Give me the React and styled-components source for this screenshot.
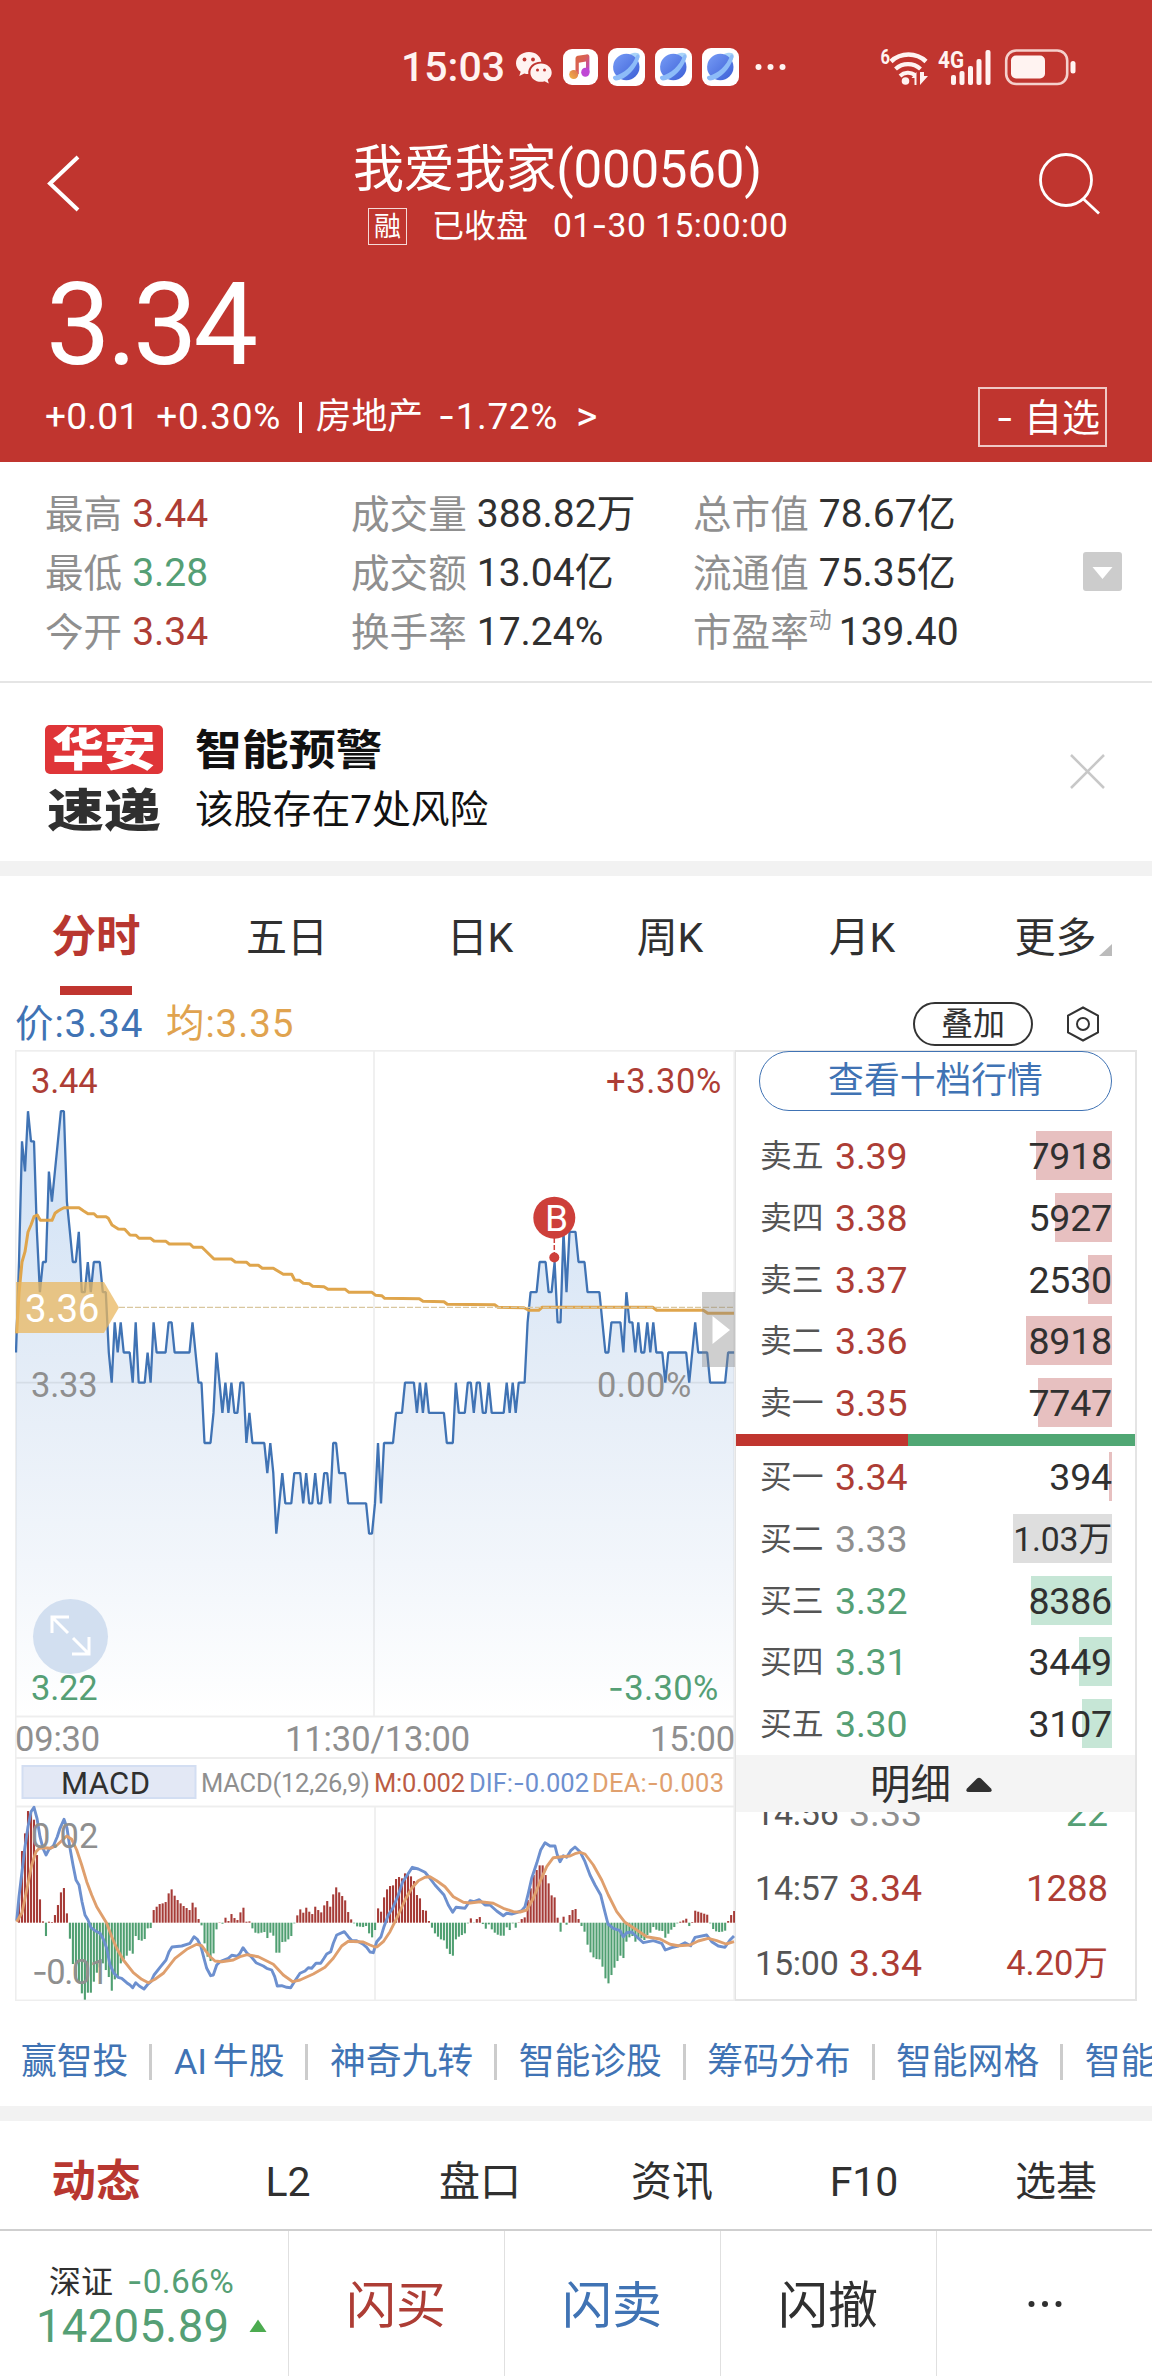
import React from 'react';
import styled, { createGlobalStyle } from 'styled-components';

const RED = '#c0352f';
const UP = '#ad3d35';
const DOWN = '#559f75';
const BLUE = '#4073b4';
const INK = '#303030';
const GREY = '#8f8f8f';
const FONT = "Roboto, 'Noto Sans CJK SC', sans-serif";

const Global = createGlobalStyle`
  * { box-sizing: border-box; }
  body { margin: 0; background: #fff; }
`;

const Page = styled.main`
  width: 1152px;
  height: 2376px;
  overflow: hidden;
  display: flex;
  flex-direction: column;
  background: #fff;
  color: ${INK};
  font-family: ${FONT};
  line-height: 1;
  white-space: nowrap;
`;

const Label = styled.span`
  font-size: ${(p) => p.$size}px;
  letter-spacing: ${(p) => p.$ls || 0}px;
  font-weight: ${(p) => p.$weight || 400};
  color: ${(p) => p.$color || 'inherit'};
  line-height: 1.2;
  margin-left: ${(p) => p.$ml || 0}px;
`;

// A wider hyphen for signed figures and dates.
const Hyphen = styled.span`
  font-family: Inter, sans-serif;
  line-height: 1;
`;

/* ---------- header ---------- */
const Header = styled.header`
  height: 462px;
  flex: none;
  background: ${RED};
  color: #fff;
  display: flex;
  flex-direction: column;
`;

const StatusBar = styled.div`
  height: 134px;
  display: flex;
  align-items: center;
  padding: 0 72px 0 401px;
`;

const Clock = styled.span`
  width: 114px;
  font-size: 41px;
  font-weight: 500;
  color: #fff3f1;
`;

const NotificationIcons = styled.div`
  display: flex;
  align-items: center;
  gap: 10px;
  flex: 1;
`;

const SystemIcons = styled.div`
  display: flex;
  align-items: center;
`;

const TitleRow = styled.div`
  height: 120px;
  display: grid;
  grid-template-columns: 180px 1fr 180px;
`;

const BackButton = styled.button`
  border: 0;
  padding: 20px 0 0 45px;
  background: none;
  display: flex;
`;

const SearchButton = styled.button`
  border: 0;
  padding: 17px 0 0 66px;
  background: none;
  display: flex;
`;

const TitleBlock = styled.div`
  display: flex;
  flex-direction: column;
  align-items: flex-start;
`;

const Title = styled.h1`
  margin: 4px 0 0 173px;
  font-weight: 400;
  font-size: 51px;
  line-height: 64px;
  letter-spacing: -0.2px;
`;

const SubRow = styled.div`
  display: flex;
  align-items: center;
  margin: 6px 0 0 188px;
  height: 37px;
`;

const MarginTag = styled.span`
  width: 39px;
  height: 37px;
  border: 1.5px solid #f5dad8;
  font-size: 27px;
  line-height: 36px;
  text-align: center;
  margin-right: 25px;
`;

const Price = styled.div`
  height: 128px;
  padding: 7px 0 0 46px;
  font-size: 115px;
  line-height: 128px;
  letter-spacing: -4px;
`;

const ChangeRow = styled.div`
  display: flex;
  align-items: center;
  justify-content: space-between;
  height: 60px;
  margin-top: 5px;
  padding: 0 45px 0 45px;
`;

const ChangeText = styled.div`
  display: flex;
  align-items: center;
`;

const Bar = styled.i`
  width: 2.5px;
  height: 31px;
  background: #fff;
  margin: 0 14px 0 18px;
`;

const WatchButton = styled.button`
  width: 129px;
  height: 60px;
  border: 2px solid #f0c8c5;
  background: none;
  color: #fff;
  font: 400 38px/58px ${FONT};
  padding: 0 5px 0 0;
  text-align: right;
  word-spacing: 1px;
`;

/* ---------- quote statistics ---------- */
const Stats = styled.section`
  height: 221px;
  flex: none;
  border-bottom: 2px solid #e5e5e5;
  display: flex;
  justify-content: space-between;
  padding: 23px 30px 0 45px;
`;

const StatGrid = styled.dl`
  margin: 0;
  height: 177px;
  display: grid;
  grid-template-columns: 306px 342px 300px;
  grid-template-rows: repeat(3, 59px);
`;

const Stat = styled.div`
  display: flex;
  align-items: center;
  gap: 10px;
`;

const StatName = styled.dt`
  color: ${GREY};
  font-size: 38.6px;
  line-height: 59px;
  display: flex;
`;

const Dynamic = styled.sup`
  font-size: 23px;
  line-height: 36px;
  margin-right: -3px;
`;

const StatValue = styled.dd`
  margin: 0;
  font-size: 39px;
  letter-spacing: 0;
  line-height: 59px;
  color: ${(p) => p.$color || INK};
`;

const ExpandStats = styled.button`
  border: 0;
  padding: 0;
  background: none;
  display: flex;
  margin-top: 67px;
  height: 39px;
`;

/* ---------- alert ---------- */
const Alert = styled.section`
  height: 178px;
  flex: none;
  display: flex;
  padding: 42px 46px 0 45px;
`;

const Logo = styled.div`
  width: 118px;
  display: flex;
  flex-direction: column;
  gap: 12px;
`;

const LogoWord = styled.div`
  height: 49px;
  border-radius: 5px;
  background: ${(p) => (p.$filled ? '#df3538' : 'transparent')};
  color: ${(p) => (p.$filled ? '#fff' : '#303030')};
  display: flex;
  justify-content: center;
  font-size: 45px;
  font-weight: 900;
  line-height: 52px;
  span { transform: scaleX(${(p) => (p.$filled ? 1.15 : 1.26)}); }
`;

const AlertText = styled.div`
  flex: 1;
  padding-left: 32px;
  color: #111;
  display: flex;
  flex-direction: column;
  align-items: flex-start;
`;

const AlertTitle = styled.h2`
  margin: 0;
  font-size: 42px;
  font-weight: 700;
  line-height: 52px;
  transform: scaleX(1.115);
  transform-origin: left;
`;

const AlertBody = styled.p`
  margin: 4px 0 0;
  font-size: 38.8px;
  line-height: 58px;
`;

const CloseButton = styled.button`
  border: 0;
  background: none;
  padding: 28px 0 0;
  display: flex;
`;

const Band = styled.div`
  height: ${(p) => p.$h}px;
  flex: none;
  background: #f2f2f2;
`;

/* ---------- tabs ---------- */
const Tabs = styled.nav`
  height: ${(p) => p.$h}px;
  flex: none;
  display: grid;
  grid-template-columns: repeat(6, 192px);
  border-bottom: ${(p) => (p.$line ? '2px solid #cfcfcf' : '0')};
`;

const Tab = styled.a`
  display: flex;
  justify-content: center;
  align-items: flex-start;
  padding-top: ${(p) => p.$pt}px;
  padding-right: ${(p) => p.$pr || 0}px;
  font-size: ${(p) => (p.$on ? 44.5 : 41)}px;
  font-weight: ${(p) => (p.$on ? 700 : 400)};
  color: ${(p) => (p.$on ? '#b83730' : INK)};
  line-height: 60px;
`;

const ActiveTab = styled(Tab)`
  flex-direction: column;
  justify-content: flex-start;
  align-items: center;
`;

const Underline = styled.i`
  width: 72px;
  height: 9px;
  margin-top: 19px;
  background: ${RED};
`;

const Legend = styled.div`
  height: 54px;
  flex: none;
  display: flex;
  align-items: center;
  padding: 3px 53px 1px 15px;
`;

const LegendItem = styled.span`
  width: ${(p) => p.$w}px;
  font-size: 38.5px;
  letter-spacing: 0.9px;
  line-height: 48px;
  color: ${(p) => p.$color};
`;

const OverlayButton = styled.button`
  margin-left: auto;
  margin-right: 34px;
  width: 120px;
  height: 44px;
  border: 2px solid #333;
  border-radius: 22px;
  background: none;
  color: ${INK};
  font: 400 32px/40px ${FONT};
  padding: 0;
`;

/* ---------- chart and order book ---------- */
const Market = styled.section`
  height: 951px;
  flex: none;
  display: flex;
  padding-left: 15px;
`;

const ChartSvg = styled.svg`
  width: 720px;
  height: 951px;
  flex: none;
  font-family: ${FONT};
`;

const Book = styled.div`
  width: 402px;
  height: 951px;
  border: 2px solid #e4e4e4;
  border-left-width: 1px;
  display: flex;
  flex-direction: column;
`;

const DepthButton = styled.button`
  width: 353px;
  height: 60px;
  margin: -1px 0 17px 23px;
  flex: none;
  border: 1.5px solid ${BLUE};
  border-radius: 30px;
  background: #fff;
  color: ${BLUE};
  font: 400 35.8px/58px ${FONT};
  padding: 0;
`;

const BookRows = styled.div`
  display: flex;
  flex-direction: column;
  height: ${(p) => p.$h}px;
  padding-top: ${(p) => p.$pt}px;
`;

const BookRow = styled.div`
  height: 61.8px;
  flex: none;
  padding: 0 23px 0 24px;
  display: grid;
  grid-template-columns: 75px 150px 1fr;
  line-height: 51px;
`;

const Side = styled.span`
  font-size: 31.8px;
  color: #555;
`;

const BookPrice = styled.span`
  font-size: 37.5px;
  letter-spacing: -0.2px;
  color: ${(p) => p.$color};
`;

const Quantity = styled.span`
  height: 49px;
  text-align: right;
  font-size: ${(p) => (p.$wide ? 33.8 : 37.5)}px;
  letter-spacing: -0.2px;
  background: linear-gradient(${(p) => p.$fill}, ${(p) => p.$fill}) no-repeat right / ${(p) => p.$w}px 100%;
`;

const RatioBar = styled.div`
  height: 12px;
  flex: none;
  background: linear-gradient(to right, ${RED} 172px, #50a774 172px);
`;

const DetailHeader = styled.div`
  height: 57px;
  flex: none;
  background: #f4f4f4;
  display: flex;
  align-items: center;
  padding: 3px 0 0 134px;
  gap: 14px;
  font-size: 40.5px;
`;

const Trades = styled.div`
  flex: 1;
  overflow: hidden;
`;

const TradeList = styled.div`
  margin-top: -36px;
`;

const Trade = styled.div`
  height: 75px;
  display: grid;
  grid-template-columns: 94px 120px 1fr;
  padding: 0 27px 0 19px;
  line-height: 75px;
  font-size: 37.5px;
  color: ${(p) => p.$color};
`;

const TradeTime = styled.span`
  font-size: 34px;
  letter-spacing: -0.2px;
  color: #555;
`;

const TradeQty = styled.span`
  text-align: right;
  font-size: ${(p) => p.$size || 37.5}px;
  color: ${(p) => p.$color};
`;

/* ---------- bottom ---------- */
const Links = styled.nav`
  height: 105px;
  flex: none;
  display: flex;
  align-items: center;
  padding: 17px 0 0 21px;
  overflow: hidden;
`;

const Link = styled.a`
  flex: none;
  font-size: 35.8px;
  word-spacing: -3px;
  line-height: 48px;
  color: ${BLUE};
  &:not(:last-child)::after {
    content: '';
    display: inline-block;
    width: 3px;
    height: 36px;
    margin: 0 21.500px 0 21px;
    vertical-align: -6px;
    background: #ccc;
  }
`;

const Footer = styled.footer`
  height: 145px;
  flex: none;
  display: grid;
  grid-template-columns: 289px repeat(4, 216px);
`;

const IndexCell = styled.div`
  border-right: 1px solid #e0e0e0;
  color: ${DOWN};
  padding-top: 31px;
`;

const IndexLine = styled.div`
  display: flex;
  align-items: center;
  height: ${(p) => p.$h}px;
  padding-left: ${(p) => p.$pl}px;
`;

const TradeButton = styled.button`
  border: 0;
  border-right: ${(p) => (p.$last ? 0 : '1px solid #e0e0e0')};
  background: none;
  color: ${(p) => p.$color};
  font: 400 50px/60px ${FONT};
  display: flex;
  justify-content: center;
  padding: 45px 1px 0 0;
`;

/* ---------- data ---------- */
// Minute prices as [ticks from the previous close, number of minutes].
const RUNS = [
  [1, 1], [4, 1], [8, 1], [7, 1], [9, 1], [8, 2], [5, 1], [3, 1], [4, 2], [7, 1], [6, 1], [7, 1], [8, 1], [9, 2],
  [6, 1], [5, 1], [4, 2], [5, 1], [3, 2], [4, 1], [3, 1], [4, 3], [3, 2], [1, 1], [0, 1], [2, 1], [1, 1], [2, 1],
  [1, 3], [0, 1], [2, 1], [0, 3], [1, 1], [0, 1], [2, 1], [1, 4], [2, 2], [1, 6], [2, 1], [1, 1], [0, 2], [-2, 3],
  [-1, 1], [1, 1], [0, 1], [-1, 1], [0, 1], [-1, 1], [0, 1], [-1, 2], [0, 2], [-2, 1], [-1, 1], [-2, 5], [-3, 1],
  [-2, 1], [-3, 1], [-5, 1], [-4, 1], [-3, 1], [-4, 3], [-3, 3], [-4, 1], [-3, 1], [-4, 2], [-3, 1], [-4, 2],
  [-3, 2], [-4, 1], [-2, 2], [-3, 3], [-4, 7], [-5, 2], [-4, 1], [-2, 1], [-4, 1], [-2, 4], [-1, 3], [0, 4],
  [-1, 1], [0, 1], [-1, 1], [0, 1], [-1, 6], [-2, 3], [0, 1], [-1, 3], [0, 2], [-1, 1], [0, 2], [-1, 2], [0, 1],
  [-1, 5], [0, 1], [-1, 1], [0, 1], [-1, 1], [0, 3], [2, 1], [3, 3], [4, 3], [3, 2], [4, 1], [2, 2], [5, 1],
  [3, 1], [5, 3], [4, 3], [3, 5], [2, 1], [1, 2], [2, 4], [1, 1], [3, 1], [2, 2], [1, 1], [2, 1], [1, 2], [2, 1],
  [1, 1], [2, 1], [1, 3], [0, 1], [1, 7], [0, 1], [1, 1], [2, 1], [1, 4], [0, 6], [1, 3],
];

const PRICES = RUNS.flatMap(([v, n]) => Array(n).fill(v));
const priceLine = PRICES.map((v, i) => `${(1 + i * 2.992).toFixed(1)},${(332.7 - v * 30.17).toFixed(1)}`).join(' ');

// Chart curves are stored at three units per pixel.
const scaled = (flat, ox, oy) => {
  const out = [];
  for (let i = 0; i < flat.length; i += 2) out.push(`${(flat[i] / 3 + ox).toFixed(1)},${(flat[i + 1] / 3 + oy).toFixed(1)}`);
  return out.join(' ');
};

const AVG_A = [50,880,57,760,66,666,75,635,84,576,93,555,102,530,112,525,121,541,156,541,165,520,174,513,183,508,192,503,237,503,250,512,264,521,282,521,291,530,318,530,325,535,336,555,355,567,374,568,390,585,408,586,417,595,452,595,462,603,498,604,508,612,570,612,580,622,606,622,642,657,694,657,706,666,740,667,750,676,775,676,787,685,820,685,850,703,875,703,884,720,898,721,910,730,928,731,938,739,972,740,984,748,1036,748,1047,757,1116,757,1127,766];
const AVG_B = [35,767,44,775,148,776,159,784,222,785,232,793,374,794,384,802,462,803,476,811,506,811,516,802,848,802,860,811,1000,811,1013,820,1092,820];
const DIF_A = [50,1082,57,1010,66,935,75,860,84,800,93,755,102,742,111,775,120,830,129,865,138,885,147,868,160,858,172,830,180,805,192,778,201,805,210,865,219,915,228,960,237,975,246,1025,255,1065,264,1080,273,1103,285,1112,300,1120,310,1138,320,1165,330,1215,342,1240,354,1252,365,1255,380,1268,390,1275,398,1283,407,1268,418,1278,432,1287,444,1272,453,1265,462,1245,480,1222,498,1200,507,1175,516,1161,545,1158,570,1150,582,1130,592,1138,602,1157,612,1195,620,1225,632,1247,640,1245,650,1215,660,1205,685,1195,695,1186,712,1189,720,1180,729,1163,740,1178,755,1192,768,1208,790,1218,800,1225,815,1230,824,1250,832,1278,845,1277,860,1282,872,1283,885,1262,900,1240,915,1233,925,1223,935,1225,948,1210,962,1210,972,1195,980,1182,992,1175,1000,1150,1010,1125,1033,1115,1045,1130,1056,1142,1070,1142,1088,1152,1100,1162];
const DIF_B = [0,1176,10,1178,20,1145,33,1130,42,1100,55,1065,68,1045,85,1005,98,965,112,945,127,922,145,927,165,937,180,955,195,975,222,1005,235,1035,248,1057,258,1042,285,1045,300,1022,312,1025,328,1019,345,1035,360,1035,380,1053,400,1067,410,1060,425,1062,440,1058,455,1052,465,1040,475,1000,485,955,500,910,512,870,525,848,540,858,555,858,562,885,570,905,580,887,590,892,602,872,615,861,630,875,645,905,660,945,675,975,692,1005,702,1045,714,1092,730,1105,750,1112,760,1130,770,1118,785,1116,800,1130,820,1148,835,1145,850,1142,875,1150,886,1170,905,1163,925,1158,945,1148,962,1157,975,1132,1010,1125,1025,1145,1045,1158,1065,1162,1080,1140,1092,1128];
const DEA_A = [50,1085,66,1058,80,990,95,915,108,875,118,865,135,863,150,865,168,858,185,842,200,828,215,838,230,870,245,915,260,965,275,1005,290,1040,305,1065,320,1090,335,1130,350,1165,370,1200,400,1238,425,1258,445,1268,465,1258,490,1240,525,1195,560,1168,590,1153,605,1157,630,1190,645,1203,665,1205,700,1200,720,1190,742,1184,775,1190,820,1213,850,1245,878,1265,900,1260,940,1242,975,1222,1000,1195,1025,1158,1045,1144,1090,1146,1110,1155];
const DEA_B = [15,1161,22,1160,40,1145,60,1115,85,1065,105,1020,125,985,145,962,165,952,180,950,200,962,225,980,250,1010,280,1027,300,1029,330,1025,370,1030,400,1045,430,1055,450,1056,470,1050,490,1015,510,965,530,920,550,893,575,890,600,888,615,881,630,877,645,882,670,915,695,960,715,1005,740,1055,765,1087,800,1110,830,1130,870,1137,900,1153,925,1157,960,1155,985,1143,1015,1135,1040,1142,1068,1152,1092,1145];

const HIST = [1010,873,820,753,757,779,885,1018,1084,1128,1085,1086,1065,1035,997,984,1060,1136,1212,1257,1265,1300,1319,1298,1298,1265,1238,1222,1210,1230,1251,1292,1258,1250,1210,1198,1187,1172,1181,1128,1140,1142,1137,1105,1104,1050,1040,1032,1030,1026,1000,988,1007,1020,1030,1038,1044,1050,1028,1042,1077,1096,1150,1190,1203,1180,1108,1087,1091,1073,1083,1062,1074,1080,1057,1043,1085,1084,1105,1118,1120,1118,1116,1134,1118,1127,1178,1178,1146,1145,1138,1128,1090,1066,1048,1058,1043,1055,1062,1040,1050,1057,1036,1023,1040,1003,982,997,1008,1021,1056,1078,1090,1099,1100,1101,1098,1120,1132,1110,1045,1055,1012,988,978,976,957,951,955,940,945,949,963,1005,1015,1050,1052,1083,1103,1120,1130,1138,1141,1166,1182,1187,1138,1130,1125,1120,1090,1075,1089,1077,1071,1092,1106,1093,1108,1118,1124,1127,1127,1102,1110,1090,1103,1087,1077,1072,1020,985,945,930,916,916,945,970,1006,1012,1073,1115,1070,1094,1065,1050,1047,1077,1098,1115,1154,1177,1192,1197,1198,1220,1255,1270,1245,1223,1203,1187,1194,1145,1132,1128,1145,1137,1135,1140,1125,1118,1101,1109,1112,1113,1133,1121,1109,1101,1090,1085,1081,1076,1098,1086,1052,1055,1058,1061,1064,1090,1107,1114,1116,1115,1112,1083,1065,1053];

const avgLine = `${scaled(AVG_A, -15, -10)} ${scaled(AVG_B, 355, -10)}`;
const difLine = `${scaled(DIF_A, -15, 510)} ${scaled(DIF_B, 355, 510)}`;
const deaLine = `${scaled(DEA_A, -15, 510)} ${scaled(DEA_B, 355, 510)}`;

const SELLS = [['卖五', '3.39', '7918', 76], ['卖四', '3.38', '5927', 57], ['卖三', '3.37', '2530', 24], ['卖二', '3.36', '8918', 86], ['卖一', '3.35', '7747', 74]];
const BUYS = [
  ['买一', '3.34', '394', 3, UP, '#e7c0c0'],
  ['买二', '3.33', '1.03万', 99, GREY, '#dedede'],
  ['买三', '3.32', '8386', 81, DOWN, '#c6e6d6'],
  ['买四', '3.31', '3449', 33, DOWN, '#c6e6d6'],
  ['买五', '3.30', '3107', 30, DOWN, '#c6e6d6'],
];
const STATS = [
  ['最高', '3.44', UP], ['成交量', '388.82万'], ['总市值', '78.67亿'],
  ['最低', '3.28', DOWN], ['成交额', '13.04亿'], ['流通值', '75.35亿'],
  ['今开', '3.34', UP], ['换手率', '17.24%'], ['市盈率', '139.40'],
];

/* ---------- icons ---------- */
const WeChat = () => (
  <svg width="38" height="34" viewBox="0 0 38 34">
    <path fill="#fff3f1" d="M14 2C6.5 2 1 7 1 13.200c0 3.600 1.800 6.500 4.700 8.600L4.300 26l5-2.600c1.300.4 2.500.6 4 .6-.8-7 5.500-12.600 13-12.200C25.500 6 20.500 2 14 2z" />
    <path fill="#fff3f1" d="M26 13.500c-6 0-10.600 4-10.600 9.200S20 31.800 26 31.800c1.300 0 2.500-.2 3.600-.6l4.200 2.200-1.100-3.700c2.500-1.700 4-4.200 4-7 0-5.200-4.700-9.200-10.700-9.200z" />
    <g fill={RED}><circle cx="9.500" cy="9.500" r="1.900" /><circle cx="18" cy="9.500" r="1.900" /><circle cx="22.500" cy="20" r="1.500" /><circle cx="29.500" cy="20" r="1.500" /></g>
  </svg>
);

const Music = () => (
  <svg width="35" height="36" viewBox="0 0 35 36">
    <defs>
      <linearGradient id="note" x1="0" y1="0" x2="1" y2="1"><stop offset="0" stopColor="#d9663f" /><stop offset=".45" stopColor="#d95f58" /><stop offset="1" stopColor="#b43ff0" /></linearGradient>
      <linearGradient id="noteLeft" x1="0" y1="1" x2="1" y2="0"><stop offset="0" stopColor="#f2b646" /><stop offset="1" stopColor="#dd7350" /></linearGradient>
    </defs>
    <rect width="35" height="36" rx="9" fill="#fff" />
    <path d="M12.500 9.500c0-1.500 1-2.500 2.400-2.800l8.600-1.300c1.800-.3 2.900.7 2.900 2.300V23h-3.400V12.500l-7.200 1.200V25h-3.300z" fill="url(#note)" />
    <circle cx="10.700" cy="25.500" r="4.500" fill="url(#noteLeft)" />
    <ellipse cx="22.400" cy="23.300" rx="4.200" ry="4.500" fill="#bf47d5" />
  </svg>
);

const Planet = ({ id }) => (
  <svg width="37" height="38" viewBox="0 0 37 38">
    <defs><linearGradient id={id} x1="0" y1="0" x2="1" y2="1"><stop offset="0" stopColor="#779cf6" /><stop offset="1" stopColor="#3b5fd6" /></linearGradient></defs>
    <rect width="37" height="38" rx="9" fill="#fff" />
    <path d="M22 6c5-2 9-1.500 9.500 1 .5 3-1.500 6-5 10z" fill="#a9d4f8" />
    <circle cx="18.300" cy="19" r="13.200" fill={`url(#${id})`} />
    <path d="M28 8C25 17 16 26 6 28c-2 1-1 4 2 4.500C18 32 29 20 31.500 9 32 6 29 5.500 28 8z" fill="#8dbcf8" />
  </svg>
);

const MoreDots = ({ color, r, gap, w, h }) => (
  <svg width={w} height={h}>{[0, 1, 2].map((i) => <circle key={i} cx={w / 2 + (i - 1) * gap} cy={h / 2} r={r} fill={color} />)}</svg>
);

const Signals = () => (
  <svg width="200" height="40" viewBox="880 46 200 40">
    <g fill="none" stroke="#fff3f1" strokeWidth="4.500">
      <path d="M891 60.500a25.500 25.500 0 0 1 35 0" />
      <path d="M895.500 68a18.500 18.500 0 0 1 25 0" strokeWidth="4.200" />
      <path d="M900 75a12 12 0 0 1 15-1" strokeWidth="4" />
      <rect x="1006.200" y="49.500" width="61" height="33.500" rx="10" stroke="#f5d0cc" strokeWidth="2.600" />
    </g>
    <g fill="#fff3f1">
      <circle cx="905.500" cy="80" r="3.800" />
      <path d="M914.500 84v-7h-3l5-6v13zM920 71v13l8-9h-4v-4z" />
      <text x="880.500" y="63" fontSize="21" fontWeight="700" fontFamily="Roboto" textLength="9.500" lengthAdjust="spacingAndGlyphs">6</text>
      <text x="938" y="67" fontSize="24" fontWeight="700" fontFamily="Roboto" textLength="26" lengthAdjust="spacingAndGlyphs">4G</text>
      {[[951, 74], [959.500, 70], [968, 65], [976.500, 58], [985.500, 49]].map(([x, y]) => <rect key={x} x={x} y={y} width="5" height={84 - y} rx="2" />)}
      <rect x="1011" y="54.500" width="34" height="23" rx="5" />
      <rect x="1070.500" y="60" width="5" height="12.500" rx="2.500" />
    </g>
  </svg>
);

const Chart = () => (
  <ChartSvg viewBox="0 0 720 951">
    <defs>
      <linearGradient id="area" x1="0" y1="60" x2="0" y2="666" gradientUnits="userSpaceOnUse">
        <stop offset="0" stopColor="#cfe1f6" /><stop offset=".45" stopColor="#e5edf7" /><stop offset=".75" stopColor="#f2f6fb" /><stop offset="1" stopColor="#fff" />
      </linearGradient>
    </defs>
    <polygon points={`1,666 ${priceLine} 719,666`} fill="url(#area)" />
    <g fill="none" stroke="#000" strokeOpacity=".065" strokeWidth="1.800">
      <path d="M0.700 951V0.800H720M719.300 0V951M0 666.500H720M0 708H720M0 756.500H720M0 950.500H720M359 0V666M360 756V951M0 332.700H719" />
    </g>
    <polyline points={priceLine} fill="none" stroke={BLUE} strokeWidth="2.300" strokeLinejoin="bevel" />
    <polyline points={avgLine} fill="none" stroke="#dfa54c" strokeWidth="3" strokeLinejoin="round" />
    <path d="M104 257.300H719" stroke="#d9c79f" strokeWidth="1.200" strokeDasharray="6 2" />
    <path d="M1 232H89L104 257.500 89 283H1z" fill="#e9b75f" fillOpacity=".75" />
    <g fontSize="34.500" letterSpacing="-.2">
      <text x="10" y="272" fontSize="38.500" fill="#fff">3.36</text>
      <text x="16" y="42.500" fill={UP}>3.44</text>
      <text x="591" y="42.500" textLength="115" fill={UP}>+3.30%</text>
      <text x="16" y="347" fill={GREY}>3.33</text>
      <text x="582" y="347" textLength="94" fill={GREY}>0.00%</text>
      <circle cx="55.500" cy="586.500" r="37.500" fill="#d2dff0" />
      <text x="16" y="650" fill={DOWN}>3.22</text>
      <text x="593" y="650" textLength="110" fill={DOWN}><tspan fontFamily="Inter">-</tspan>3.30%</text>
      <g fill={GREY}>
        <text x="0" y="701" textLength="85">09:30</text>
        <text x="270" y="701" textLength="185">11:30/13:00</text>
        <text x="635" y="701" textLength="85">15:00</text>
      </g>
    </g>
    <path d="M53 583L37.500 567.500M37 583V567H54M58 588L73.500 603.500M74 587V604H57" fill="none" stroke="#fff" strokeWidth="3" />
    <path d="M539.300 188V207" stroke="#cd3f3a" strokeWidth="1.500" strokeDasharray="5 2" />
    <circle cx="539.300" cy="207.500" r="5" fill="#cd3f3a" />
    <circle cx="539.300" cy="167.700" r="21" fill="#cd3f3a" />
    <text x="530" y="181" fontSize="37" fill="#fff">B</text>
    <rect x="687" y="242" width="33" height="75" fill="#888" fillOpacity=".4" />
    <path d="M697.500 266L715 280 697.500 294z" fill="#fff" />

    <rect x="7.500" y="716" width="173" height="32" fill="#e3e8f5" stroke="#d3def2" strokeWidth="2" />
    <text x="46" y="744" fontSize="31" fill={INK} textLength="89">MACD</text>
    <g fontSize="25.500">
      <text x="186" y="742" fill={GREY} textLength="169">MACD(12,26,9)</text>
      <text x="359" y="742" fill="#bc5b43" textLength="91">M:0.002</text>
      <text x="454" y="742" fill="#6d90cf" textLength="120">DIF:<tspan fontFamily="Inter">-</tspan>0.002</text>
      <text x="577" y="742" fill="#e0a06e" textLength="132">DEA:<tspan fontFamily="Inter">-</tspan>0.003</text>
    </g>
    {HIST.map((y, i) => {
      const v = (1088 - y) / 3;
      return <rect key={i} x={3 + i * 2.992} y={v > 0 ? 872.700 - v : 872.700} width="2.100" height={Math.abs(v)} fill={v > 0 ? '#a63b37' : '#4f9f71'} />;
    })}
    <polyline points={difLine} fill="none" stroke="#6d90cf" strokeWidth="2.900" strokeLinejoin="round" />
    <polyline points={deaLine} fill="none" stroke="#df9f6d" strokeWidth="2.900" strokeLinejoin="round" />
    <g fontSize="34.500" fill={GREY}>
      <text x="16" y="798">0.02</text>
      <text x="17" y="934" textLength="77"><tspan fontFamily="Inter">-</tspan>0.01</text>
    </g>
  </ChartSvg>
);

export default function App() {
  return (
    <Page>
      <Global />
      <Header>
        <StatusBar>
          <Clock>15:03</Clock>
          <NotificationIcons>
            <WeChat /><Music /><Planet id="p1" /><Planet id="p2" /><Planet id="p3" />
            <MoreDots color="#fff3f1" r={3} gap={12} w={43} h={38} />
          </NotificationIcons>
          <SystemIcons><Signals /></SystemIcons>
        </StatusBar>
        <TitleRow>
          <BackButton aria-label="返回">
            <svg width="36" height="60"><path d="M33 3L5 29.500 33 56" fill="none" stroke="#fff" strokeWidth="4" /></svg>
          </BackButton>
          <TitleBlock>
            <Title>我爱我家(000560)</Title>
            <SubRow>
              <MarginTag>融</MarginTag>
              <Label $size={32}>已收盘</Label>
              <Label $size={33.5} $ml={25} $ls={0.5}>01<Hyphen>-</Hyphen>30 15:00:00</Label>
            </SubRow>
          </TitleBlock>
          <SearchButton aria-label="搜索">
            <svg width="64" height="66"><g fill="none" stroke="#fff" strokeWidth="2.800"><circle cx="28" cy="29" r="25.500" /><path d="M45.500 48L61 62.500" /></g></svg>
          </SearchButton>
        </TitleRow>
        <Price>3.34</Price>
        <ChangeRow>
          <ChangeText>
            <Label $size={37} $ls={0.2}>+0.01</Label>
            <Label $size={37} $ml={17} $ls={0.8}>+0.30%</Label>
            <Bar />
            <Label $size={35.8}>房地产</Label>
            <Label $size={37} $ml={15} $ls={0.6}><Hyphen>-</Hyphen>1.72%</Label>
            <Label $size={41} $ml={18}>&gt;</Label>
          </ChangeText>
          <WatchButton><Hyphen>-</Hyphen> 自选</WatchButton>
        </ChangeRow>
      </Header>

      <Stats>
        <StatGrid>
          {STATS.map(([name, value, color]) => (
            <Stat key={name}>
              <StatName>{name}{name === '市盈率' && <Dynamic>动</Dynamic>}</StatName>
              <StatValue $color={color}>{value}</StatValue>
            </Stat>
          ))}
        </StatGrid>
        <ExpandStats aria-label="展开">
          <svg width="39" height="39"><rect width="39" height="39" rx="3" fill="#ccc" /><path d="M9.500 15h20L19.500 27z" fill="#fff" /></svg>
        </ExpandStats>
      </Stats>

      <Alert>
        <Logo>
          <LogoWord $filled><span>华安</span></LogoWord>
          <LogoWord><span>速递</span></LogoWord>
        </Logo>
        <AlertText>
          <AlertTitle>智能预警</AlertTitle>
          <AlertBody>该股存在7处风险</AlertBody>
        </AlertText>
        <CloseButton aria-label="关闭">
          <svg width="37" height="37"><path d="M2 2L35 35M35 2L2 35" stroke="#c8c8c8" strokeWidth="2.500" /></svg>
        </CloseButton>
      </Alert>
      <Band $h={15} />

      <Tabs $h={120}>
        <ActiveTab $on $pt={31}>分时<Underline /></ActiveTab>
        <Tab $pt={32} $pr={2}>五日</Tab>
        <Tab $pt={32}>日K</Tab>
        <Tab $pt={32} $pr={4}>周K</Tab>
        <Tab $pt={32} $pr={4}>月K</Tab>
        <Tab $pt={32}>
          <svg width="14" height="1" />更多<svg width="15" height="56"><path d="M15 36V48H2z" fill="#bbb" /></svg>
        </Tab>
      </Tabs>

      <Legend>
        <LegendItem $w={151} $color={BLUE}>价:3.34</LegendItem>
        <LegendItem $w={150} $color="#e0a34f">均:3.35</LegendItem>
        <OverlayButton>叠加</OverlayButton>
        <svg width="32" height="36"><g fill="none" stroke="#333" strokeWidth="2"><path d="M16 1.500L31 9.500V26.500L16 34.500 1 26.500V9.500z" /><circle cx="16" cy="18" r="6" /></g></svg>
      </Legend>

      <Market>
        <Chart />
        <Book>
          <DepthButton>查看十档行情</DepthButton>
          <BookRows $h={306} $pt={3}>
            {SELLS.map(([side, price, qty, w]) => (
              <BookRow key={side}><Side>{side}</Side><BookPrice $color={UP}>{price}</BookPrice><Quantity $fill="#e7c0c0" $w={w}>{qty}</Quantity></BookRow>
            ))}
          </BookRows>
          <RatioBar />
          <BookRows $h={309} $pt={6}>
            {BUYS.map(([side, price, qty, w, color, fill]) => (
              <BookRow key={side}><Side>{side}</Side><BookPrice $color={color}>{price}</BookPrice><Quantity $fill={fill} $w={w} $wide={w === 99}>{qty}</Quantity></BookRow>
            ))}
          </BookRows>
          <DetailHeader>明细<svg width="28" height="18"><path d="M12 2.500Q14 1 16 2.500L26 12.500Q28 16 24 16H4Q0 16 2 12.500z" fill="#303030" /></svg></DetailHeader>
          <Trades>
            <TradeList>
              <Trade $color={GREY}><TradeTime>14:56</TradeTime>3.33<TradeQty $color={DOWN}>22</TradeQty></Trade>
              <Trade $color={UP}><TradeTime>14:57</TradeTime>3.34<TradeQty $size={36.5}>1288</TradeQty></Trade>
              <Trade $color={UP}><TradeTime>15:00</TradeTime>3.34<TradeQty $size={34.5}>4.20万</TradeQty></Trade>
            </TradeList>
          </Trades>
        </Book>
      </Market>

      <Links>
        {['赢智投', 'AI 牛股', '神奇九转', '智能诊股', '筹码分布', '智能网格', '智能条件'].map((t) => <Link key={t}>{t}</Link>)}
      </Links>
      <Band $h={15} />

      <Tabs $h={110} $line>
        <Tab $on $pt={31}>动态</Tab>
        {['L2', '盘口', '资讯', 'F10', '选基'].map((t) => <Tab key={t} $pt={31}>{t}</Tab>)}
      </Tabs>

      <Footer>
        <IndexCell>
          <IndexLine $h={40} $pl={49}>
            <Label $size={32} $color={INK}>深证</Label>
            <Label $size={33.5} $ml={14} $ls={0.3}><Hyphen>-</Hyphen>0.66%</Label>
          </IndexLine>
          <IndexLine $h={50} $pl={36}>
            <Label $size={45.5} $ls={0.3}>14205.89</Label>
            <svg width="40" height="20"><path d="M20.500 15H37.500L29 2.500z" fill="#4cab50" /></svg>
          </IndexLine>
        </IndexCell>
        <TradeButton $color={UP}>闪买</TradeButton>
        <TradeButton $color={BLUE}>闪卖</TradeButton>
        <TradeButton $color={INK}>闪撤</TradeButton>
        <TradeButton $last aria-label="更多"><MoreDots color={INK} r={3} gap={13.500} w={40} h={56} /></TradeButton>
      </Footer>
    </Page>
  );
}
